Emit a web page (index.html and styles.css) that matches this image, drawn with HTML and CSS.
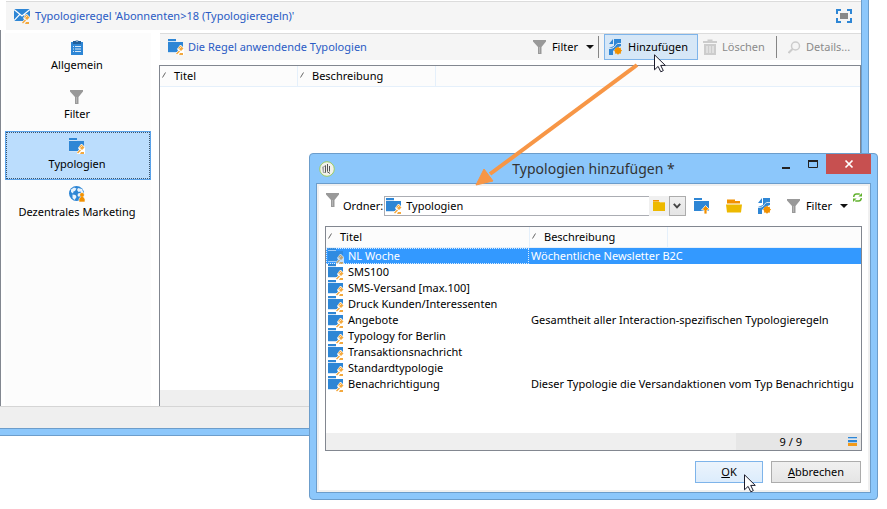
FILE: index.html
```html
<!DOCTYPE html>
<html lang="de">
<head>
<meta charset="utf-8">
<meta name="viewport" content="width=device-width, initial-scale=1">
<title>Typologieregel</title>
<link rel="stylesheet" href="styles.css">
</head>
<body>
<svg class="defs" aria-hidden="true">
  <symbol id="typology" viewBox="0 0 16 16">
    <path d="M0 0h8v2H0zM0 3h15v10H0z" fill="#2e86d5"/>
    <path d="M0 2h8v1H0zM0 13h8v1H0z" fill="#cfe3f6"/>
    <path d="M12 6h1l3 3v7H8v-2l2-2.500L9 10z" fill="#fff"/>
    <path d="m10 9 2.500-2.500L15.500 9.500 13 12zM8 14.500l3-3 1 1-3 3z" fill="#f3a93f"/>
    <path d="m11.500 9.500 1.200-1.200M12 15h4" stroke="#fff" stroke-width="1"/>
    <path d="M12 14h3v2h-4z" fill="#f3a93f"/>
  </symbol>
  <symbol id="rule" viewBox="0 0 16 16">
    <path d="M0 1h16v12H0z" fill="#2e86d5"/>
    <path d="m0 1.500 8 6.500 8-6.500M0 12.600l5.600-6M16 12.600l-5.600-6" fill="none" stroke="#fff" stroke-width="1.300"/>
    <path d="M12 6h1l3 3v7H8v-2l2-2.500L9 10z" fill="#f5f5f5"/>
    <path d="m10 9 2.500-2.500L15.500 9.500 13 12zM8 14.500l3-3 1 1-3 3zM12 14h3v2h-4z" fill="#f3a93f"/>
    <path d="m11.500 9.500 1.200-1.200" stroke="#fff" stroke-width="1"/>
  </symbol>
  <symbol id="clipboard" viewBox="0 0 16 16">
    <path d="M2 3h12v13H2z" fill="#2e86d5"/>
    <path d="M4 2h2.500a1.600 1.600 0 0 1 3 0H12v3H4z" fill="#1f5f9c"/>
    <circle cx="8" cy="2" r=".8" fill="#fff"/>
    <path d="M4 7.500h1M4 10h1M4 12.500h1M6 7.500h6M6 10h6M6 12.500h6" stroke="#d6e8f8" stroke-width="1"/>
  </symbol>
  <symbol id="funnel" viewBox="0 0 14 14">
    <path d="M0 0h13v1.500L8.500 7v7h-3.500V7L0 1.500z" fill="#999"/>
    <path d="M6 7h1v6H6z" fill="#b5b5b5"/>
  </symbol>
  <symbol id="globe" viewBox="0 0 16 16">
    <circle cx="7.500" cy="7.500" r="7.500" fill="#2e86d5"/>
    <path d="M2 3.500 5 1.500l2.500 1L6 5 4.500 5.500 4 7.500 2 6zM9 2l4 1 1.500 4-2 .5-1-2-2 .5L8 4zM3.500 8.500l3 .5 1 2-2 3-2-2zM9 7.500l2-.5 1 2-2 2-1.500-1.500z" fill="#e7f2fc"/>
    <path d="M13 6.500a2.200 2.200 0 0 1 1.200 4.100L16 13v3h-6v-3l1.800-2.400A2.200 2.200 0 0 1 13 6.500z" fill="#f29100" stroke="#fff" stroke-width=".6"/>
  </symbol>
  <symbol id="page-new" viewBox="0 0 13 16">
    <path d="M5 0h7v7L7 9l-3 3v4H0V9l5-2zM0 5l4-5v5z" fill="#2e86d5"/>
    <path d="M0 9.500C3 9.500 5 9 6.500 6.500S9 4.500 12 4.500" fill="none" stroke="#d6e7f7" stroke-width="1"/>
    <path d="m9 7.500 1.100 1.600 1.900-.4-.4 1.900 1.600 1.100-1.600 1.100.4 1.900-1.900-.4L9 15.900l-1.100-1.600-1.900.4.4-1.900-1.600-1.100 1.600-1.100L6 8.700l1.900.4z" fill="#f29100"/>
    <circle cx="9" cy="11.700" r="3" fill="#f29100"/>
  </symbol>
  <symbol id="trash" viewBox="0 0 14 16">
    <path d="M4.500 2V.5h5V2H14v2H0V2zM1 5h12v11H1z" fill="#ccc"/>
    <path d="M4 7v7M7 7v7M10 7v7" stroke="#f3f3f3"/>
  </symbol>
  <symbol id="loupe" viewBox="0 0 13 13">
    <circle cx="7.500" cy="5" r="4" fill="none" stroke="#ccc" stroke-width="1.500"/>
    <path d="m4.500 8-4 4" stroke="#ccc" stroke-width="2"/>
  </symbol>
  <symbol id="fullscreen" viewBox="0 0 16 14">
    <path d="M1 5V1h4M11 1h4v4M15 9v4h-4M5 13H1V9" fill="none" stroke="#2e86d5" stroke-width="2"/>
    <path d="M4 4h8v6H4z" fill="#888"/>
  </symbol>
  <symbol id="folder" viewBox="0 0 12 11">
    <path d="M0 0h6v2H0z" fill="#f29100"/>
    <path d="M0 2h12v9H0z" fill="#edb900"/><path d="M0 1.500h6l1 1h5" fill="none" stroke="#f7d97a" stroke-width=".6"/>
  </symbol>
  <symbol id="folder-open" viewBox="0 0 16 13">
    <path d="M1 0h8v1.500h5V4H1z" fill="#f29100"/>
    <path d="M0 5h16l-1 8H1z" fill="#edb900"/>
  </symbol>
  <symbol id="folder-up" viewBox="0 0 16 16">
    <path d="M0 0h8v2H0zM0 3h15v10H0z" fill="#2e86d5"/>
    <path d="M11.500 7.500 16 12h-3v4h-3v-4H7.500z" fill="#f29100" stroke="#fff" stroke-width=".8"/>
  </symbol>
  <symbol id="refresh" viewBox="0 0 8 8">
    <path d="M.7 3.500V3Q1 .9 3 .9h3M7.300 4.500V5Q7 7.100 5 7.100H2" fill="none" stroke="#62b22f" stroke-width="1.300"/>
    <path d="M8 0v3.200H4.800zM0 8V4.800h3.200z" fill="#62b22f"/>
  </symbol>
  <symbol id="caret" viewBox="0 0 8 4"><path d="M0 0h8L4 4z" fill="#111"/></symbol>
  <symbol id="sort" viewBox="0 0 5 6"><path d="M.5 5.500 3.500.500" stroke="#666"/></symbol>
  <symbol id="pointer" viewBox="0 0 12 19">
    <path d="M.5.8v15l3.600-3.400 2.700 5.400 2.500-1.200-2.600-5.200h4.600z" fill="#fff" stroke="#1b1b2b"/>
  </symbol>
</svg>

<main class="window">
  <header class="caption">
    <svg class="i16"><use href="#rule"/></svg>
    <h1>Typologieregel 'Abonnenten&gt;18 (Typologieregeln)'</h1>
    <button class="plain" aria-label="Vollbild"><svg class="i16x14"><use href="#fullscreen"/></svg></button>
  </header>
  <div class="workspace">
    <nav class="sidebar">
      <a href="#" class="nav-item"><svg class="i16"><use href="#clipboard"/></svg>Allgemein</a>
      <a href="#" class="nav-item"><svg class="i14"><use href="#funnel"/></svg>Filter</a>
      <a href="#" class="nav-item current"><svg class="i16"><use href="#typology"/></svg>Typologien</a>
      <a href="#" class="nav-item"><svg class="i16"><use href="#globe"/></svg>Dezentrales Marketing</a>
    </nav>
    <section class="panel">
      <div class="toolbar">
        <svg class="i16"><use href="#typology"/></svg>
        <h2>Die Regel anwendende Typologien</h2>
        <button class="tool filter"><svg class="i14"><use href="#funnel"/></svg>Filter<svg class="caret"><use href="#caret"/></svg></button>
        <span class="divider"></span>
        <button class="tool add"><svg class="page"><use href="#page-new"/></svg>Hinzufügen</button>
        <button class="tool delete" disabled><svg class="trash"><use href="#trash"/></svg>Löschen</button>
        <span class="divider"></span>
        <button class="tool details" disabled><svg class="loupe"><use href="#loupe"/></svg>Details...</button>
      </div>
      <div class="grid-box">
        <table>
          <colgroup><col class="main-title"><col class="desc"><col></colgroup>
          <thead><tr>
            <th><svg class="sort"><use href="#sort"/></svg>Titel</th>
            <th><svg class="sort"><use href="#sort"/></svg>Beschreibung</th>
            <th></th>
          </tr></thead>
        </table>
        <div class="grid-foot"></div>
      </div>
    </section>
  </div>
  <footer class="status"></footer>
</main>

<section class="dialog" role="dialog" aria-labelledby="dialog-title">
  <header class="dialog-caption">
    <svg class="app" viewBox="0 0 16 16"><circle cx="8" cy="8" r="7.300" fill="#f1f1ea" stroke="#9ccc65" stroke-width="1"/><path d="M3 6 7 4v8H4z" fill="#a8a8a8"/><path d="M5 6h1v5H5z" fill="#eee"/><path d="M8.500 3v7M6.500 4.500v7M10.500 5v5.500M8 10.500l3 2" fill="none" stroke="#555" stroke-width="1"/></svg>
    <h2 id="dialog-title">Typologien hinzufügen *</h2>
    <div class="window-buttons">
      <button aria-label="Minimieren"><svg viewBox="0 0 12 12"><path d="M2 9h8v2H2z" fill="#222"/></svg></button>
      <button aria-label="Maximieren"><svg viewBox="0 0 12 12"><path d="M1.500 3v6.500h9V3z" fill="none" stroke="#222"/><path d="M1 2h10v2H1z" fill="#222"/></svg></button>
      <button class="close" aria-label="Schließen"><svg viewBox="0 0 12 12"><path d="m2.500 2.500 7 7m0-7-7 7" stroke="#fff" stroke-width="1.700"/></svg></button>
    </div>
  </header>
  <div class="client">
    <div class="search-row">
      <svg class="i14 lead"><use href="#funnel"/></svg>
      <label for="folder-name">Ordner:</label>
      <div class="combo">
        <svg class="i16"><use href="#typology"/></svg>
        <input id="folder-name" type="text" value="Typologien">
      </div>
      <button class="browse" aria-label="Ordner wählen"><svg><use href="#folder"/></svg></button>
      <button class="drop" aria-label="Liste öffnen"><svg viewBox="0 0 8 6"><path d="m.8.800 3.200 3.600L7.200.800" fill="none" stroke="#444" stroke-width="1.900"/></svg></button>
      <div class="actions">
        <button class="plain" aria-label="Übergeordneter Ordner"><svg class="i16"><use href="#folder-up"/></svg></button>
        <button class="plain" aria-label="Ordner öffnen"><svg class="i16x14"><use href="#folder-open"/></svg></button>
        <button class="plain" aria-label="Neu"><svg class="page"><use href="#page-new"/></svg></button>
        <button class="tool dialog-filter"><svg class="i14"><use href="#funnel"/></svg>Filter<svg class="caret"><use href="#caret"/></svg></button>
      </div>
      <button class="plain reload" aria-label="Aktualisieren"><svg><use href="#refresh"/></svg></button>
    </div>
    <div class="list-box">
      <table>
        <colgroup><col class="list-title"><col class="desc"><col></colgroup>
        <thead><tr>
          <th><svg class="sort"><use href="#sort"/></svg>Titel</th>
          <th><svg class="sort"><use href="#sort"/></svg>Beschreibung</th>
          <th></th>
        </tr></thead>
        <tbody>
          <tr class="selected"><td><svg class="i16"><use href="#typology"/></svg>NL Woche</td><td colspan="2">Wöchentliche Newsletter B2C</td></tr>
          <tr><td><svg class="i16"><use href="#typology"/></svg>SMS100</td><td colspan="2"></td></tr>
          <tr><td><svg class="i16"><use href="#typology"/></svg>SMS-Versand [max.100]</td><td colspan="2"></td></tr>
          <tr><td><svg class="i16"><use href="#typology"/></svg>Druck Kunden/Interessenten</td><td colspan="2"></td></tr>
          <tr><td><svg class="i16"><use href="#typology"/></svg>Angebote</td><td colspan="2">Gesamtheit aller Interaction-spezifischen Typologieregeln</td></tr>
          <tr><td><svg class="i16"><use href="#typology"/></svg>Typology for Berlin</td><td colspan="2"></td></tr>
          <tr><td><svg class="i16"><use href="#typology"/></svg>Transaktionsnachricht</td><td colspan="2"></td></tr>
          <tr><td><svg class="i16"><use href="#typology"/></svg>Standardtypologie</td><td colspan="2"></td></tr>
          <tr><td><svg class="i16"><use href="#typology"/></svg>Benachrichtigung</td><td colspan="2">Dieser Typologie die Versandaktionen vom Typ Benachrichtigu</td></tr>
        </tbody>
      </table>
      <div class="list-foot">
        <div class="counter"><span>9 / 9</span>
          <svg viewBox="0 0 9 9"><path d="M0 0h9v1H0zM0 3h9v2H0z" fill="#2e86d5"/><path d="M0 1h9v1H0zM0 5h9v1H0z" fill="#a9cdee"/><path d="M0 6h9v3H0z" fill="#f29a18"/></svg>
        </div>
      </div>
    </div>
    <div class="dialog-actions">
      <button class="push ok"><u>O</u>K</button>
      <button class="push cancel"><u>A</u>bbrechen</button>
    </div>
  </div>
</section>

<svg class="arrow" viewBox="0 0 162 121" aria-hidden="true">
  <path d="M161 1 14 110" stroke="#f79646" stroke-width="4"/><path d="M0 121 8 105l9 12z" fill="#f79646" stroke="#f79646" stroke-width="1"/>
</svg>
<svg class="pointer on-add" aria-hidden="true"><use href="#pointer"/></svg>
<svg class="pointer on-ok" aria-hidden="true"><use href="#pointer"/></svg>
</body>
</html>
```

FILE: styles.css
```css
* { box-sizing: border-box; }

body {
  margin: 0;
  min-height: 100vh;
  position: relative;
  overflow: hidden;
  background: #fff;
  color: #000;
  font: 11px/16px "Noto Sans", "Open Sans", sans-serif;
}

button, input { font: inherit; color: inherit; }
button { padding: 0; border: 0; background: none; white-space: nowrap; }
svg { display: block; flex: none; }
h1, h2 { margin: 0; font-size: 11px; font-weight: 400; color: #2a5bc4; }
.defs { position: absolute; width: 0; height: 0; }

.i16 { width: 16px; height: 16px; }
.i16x14 { width: 16px; height: 14px; }
.i14 { width: 14px; height: 14px; }
.page { width: 13px; height: 16px; overflow: visible; }
.caret { width: 8px; height: 4px; }
.sort { width: 5px; height: 6px; }

/* Main window */
.window {
  display: flex;
  flex-direction: column;
  height: calc(100vh - 73px);
  margin-right: 18px;
  border-right: 1px solid #6c9dcb;
  border-bottom: 1px solid #6c9dcb;
  background: #fff;
  box-shadow: inset -6px -6px #8cc7fb, inset -7px -7px #6c9dcb;
  padding: 1px 7px 7px 0;
}

.caption {
  display: flex;
  align-items: center;
  gap: 5px;
  height: 29px;
  margin-left: 6px;
  padding: 0 9px 0 8px;
  border-top: 1px solid #dcdcdc;
  background: #f5f5f5;
}
.caption .plain { margin-left: auto; }

.workspace {
  flex: 1;
  display: flex;
  gap: 8px;
  padding-left: 4px;
  border-left: 1px solid #828790;
}

.sidebar { width: 146px; padding-top: 3px; background: #fcfcfc; background-clip: content-box; }
.nav-item {
  display: flex;
  flex-direction: column;
  align-items: center;
  justify-content: flex-end;
  gap: 2px;
  height: 49px;
  padding: 0 2px 9px 0;
  color: #000;
  text-decoration: none;
}
.nav-item.current { border: 1px solid #5ba3ea; outline: 1px dotted #3d556c; outline-offset: -2px; background: #bbddfd; padding-bottom: 7px; }

.panel { flex: 1; min-width: 0; display: flex; flex-direction: column; padding-top: 3px; }
.toolbar {
  display: flex;
  align-items: center;
  height: 27px;
  margin: 0 0 5px 1px;
  padding-left: 8px;
  border-top: 1px solid #dcdcdc;
  background: #f5f5f5;
}
.toolbar h2 { margin-left: 4px; }
.tool { display: flex; align-items: center; gap: 5px; }
.toolbar .filter { margin-left: auto; padding-right: 4px; }
.tool .caret { margin-left: 3px; }
.divider { width: 1px; height: 22px; background: #858585; }
.add {
  height: 26px;
  width: 94px;
  margin-left: 5px;
  padding-left: 4px;
  gap: 6px;
  border: 1px solid #7eb4ea;
  background: #d6e7f7;
}
.tool:disabled { color: #8b8b8b; }
.delete { width: 78px; padding-left: 5px; }
.trash { width: 14px; height: 16px; }
.details { width: 84px; padding-left: 11px; }
.loupe { width: 13px; height: 13px; }

.grid-box {
  flex: 1;
  display: flex;
  flex-direction: column;
  justify-content: space-between;
  border: solid #828790;
  border-width: 1px 1px 0;
}
.grid-foot { height: 16px; background: #efefef; }
.status { height: 22px; border-top: 1px solid #d5d5d5; background: #efefef; }

/* Tables */
table { width: 100%; table-layout: fixed; border-collapse: separate; border-spacing: 0; }
.main-title { width: 137px; }
.list-title { width: 203px; }
.desc { width: 138px; }
th {
  height: 21px;
  padding: 0 0 0 2px;
  border-bottom: 1px solid #e5f0fb;
  background: #fcfcfc;
  font-weight: 400;
  text-align: left;
}
th + th { border-left: 1px solid #e5f0fb; }
th .sort { display: inline-block; margin-right: 7px; vertical-align: 2px; }
td { height: 16px; padding: 0 0 0 2px; line-height: 16px; overflow: hidden; white-space: nowrap; }
td .i16 { float: left; margin-right: 4px; }
.selected td { background: #3399ff; color: #fff; outline: 1px dotted #d9ecff; outline-offset: -1px; }
.selected td + td { outline: 0; }
.selected .i16 { opacity: .7; }

/* Dialog */
.dialog {
  position: absolute;
  top: 153px;
  right: 9px;
  left: 309px;
  bottom: 9px;
  display: flex;
  flex-direction: column;
  padding: 0 6px 6px;
  border: 1px solid #6c9dcb;
  border-radius: 4px;
  background: #8cc7fb;
}
.dialog-caption { display: flex; align-items: center; height: 29px; padding-left: 3px; }
.app { width: 16px; height: 16px; }
.dialog-caption h2 { flex: 1; padding-left: 80px; text-align: center; color: #333; font-size: 14px; line-height: 20px; }
.window-buttons { display: flex; align-self: flex-start; }
.window-buttons button { display: grid; place-items: center; width: 27px; height: 20px; }
.window-buttons svg { width: 12px; height: 12px; }
.window-buttons .close { width: 45px; background: #c75050; }

.client {
  flex: 1;
  display: flex;
  flex-direction: column;
  min-height: 0;
  padding: 7px 6px 7px 7px;
  border: 1px solid #6c9dcb;
  outline: 2px solid #f0f0f0;
  outline-offset: -3px;
  background: #fff;
}

.search-row { display: flex; align-items: center; height: 29px; margin: 0 0 6px 2px; }
.lead, .reload { align-self: flex-start; margin-top: 2px; }
.search-row label { margin: 0 1px 0 3px; }
.combo { flex: 1; display: flex; align-items: center; gap: 4px; height: 20px; padding-left: 1px; border: 1px solid #abadb3; border-right: 0; }
.combo input { width: 100%; min-width: 0; height: 18px; padding: 0; border: 0; outline: 0; background: none; }
.browse { display: grid; place-items: center; width: 20px; height: 20px; background: #f0f0f0; }
.browse svg { width: 12px; height: 11px; }
.drop { display: grid; place-items: center; width: 17px; height: 20px; border: 1px solid #acacac; background: linear-gradient(#f0f0f0, #e5e5e5); }
.drop svg { width: 8px; height: 6px; }
.actions { display: flex; align-items: center; gap: 16px; padding-left: 8px; }
.reload { margin: 2px 2px 0 5px; }
.reload svg { width: 9px; height: 9px; }

.list-box {
  flex: 1;
  display: flex;
  flex-direction: column;
  justify-content: space-between;
  min-height: 0;
  margin: 0 2px 0 1px;
  border: 1px solid #828790;
}
.list-foot { display: flex; justify-content: flex-end; background: #efefef; }
.counter {
  display: flex;
  align-items: center;
  justify-content: flex-end;
  gap: 46px;
  width: 125px;
  height: 17px;
  padding-right: 4px;
  background: #e6e6e6;
}
.counter svg { width: 9px; height: 9px; }

.dialog-actions { display: flex; justify-content: flex-end; gap: 8px; margin: 10px 3px 2px 0; }
.push { height: 22px; border: 1px solid #acacac; background: linear-gradient(#f0f0f0, #e5e5e5); }
.ok { width: 68px; border-color: #7eb4ea; background: linear-gradient(#ecf4fc, #dcecfc); }
.cancel { width: 90px; }

/* Overlays */
.arrow { position: absolute; left: 476px; top: 64px; width: 162px; height: 121px; overflow: visible; }
.pointer { position: absolute; width: 12px; height: 19px; }
.on-add { left: 654px; top: 54px; }
.on-ok { left: 744px; top: 474px; }
```
